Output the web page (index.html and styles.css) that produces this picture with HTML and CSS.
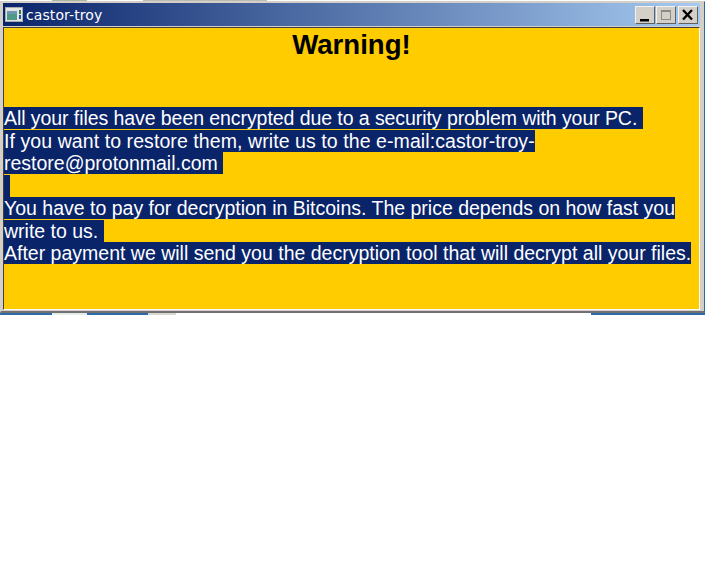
FILE: index.html
```html
<!DOCTYPE html>
<html lang="en">
<head>
<meta charset="utf-8">
<title>castor-troy</title>
<link rel="stylesheet" href="styles.css">
</head>
<body>
<div class="strip strip-top">
  <i class="s s-a"></i><i class="s s-b"></i><i class="s s-c"></i><i class="s s-d"></i>
</div>
<div class="window">
  <div class="titlebar">
    <svg class="appicon" width="18" height="15" viewBox="0 0 18 15" aria-hidden="true">
      <rect x="0" y="0" width="18" height="15" fill="#e4e6e4"/>
      <rect x="0.5" y="0.5" width="17" height="14" fill="none" stroke="#a8acb0"/>
      <rect x="2" y="4" width="10" height="9" fill="#4f9a86"/>
      <rect x="2" y="4" width="10" height="3" fill="#6f97b0"/>
      <rect x="14" y="3" width="2" height="4" fill="#2a7a5a"/>
      <rect x="14" y="8" width="2" height="4" fill="#2050a0"/>
    </svg>
    <span class="title">castor-troy</span>
    <div class="controls">
      <button class="btn" aria-label="Minimize"><svg width="18" height="16" viewBox="0 0 18 16"><rect x="4" y="12" width="9" height="2.5" fill="#000"/></svg></button>
      <button class="btn" aria-label="Maximize"><svg width="18" height="16" viewBox="0 0 18 16"><rect x="4.5" y="3.5" width="9" height="9" fill="none" stroke="#8a8a86"/><rect x="5" y="4" width="8" height="1" fill="#8a8a86"/></svg></button>
      <button class="btn btn-close" aria-label="Close"><svg width="18" height="16" viewBox="0 0 18 16"><path d="M4 3 L13 12.5 M13 3 L4 12.5" stroke="#000" stroke-width="2.4" fill="none"/></svg></button>
    </div>
  </div>
  <div class="content">
    <h1 class="heading">Warning!</h1>
    <p class="message"><span class="sel"><span class="tight">All your files have been encrypted due to a security problem with your PC.&nbsp;</span><br><span class="loose">If you want to restore them, write us to the e-mail:castor-troy-</span><br>restore@protonmail.com&nbsp;<br><span class="blank">&nbsp;</span><br>You have to pay for decryption in Bitcoins. The price depends on how fast you write to us.&nbsp;<br>After payment we will send you the decryption tool that will decrypt all your files.</span></p>
  </div>
</div>
<div class="strip strip-bottom">
  <i class="s s-e"></i><i class="s s-f"></i><i class="s s-g"></i><i class="s s-h"></i><i class="s s-i"></i><i class="s s-j"></i>
</div>
</body>
</html>
```
FILE: styles.css
```css
* { box-sizing: border-box; }
html, body { margin: 0; padding: 0; background: #fff; }
body { width: 720px; height: 576px; overflow: hidden; font-family: "Liberation Sans", Arial, sans-serif; }

.strip { display: flex; width: 705px; }
.strip-top { height: 1px; }
.strip-bottom { height: 2px; }
.s { display: block; height: 100%; }
.s-a { width: 52px; background: #fff; }
.s-b { width: 35px; background: #a9b8a0; }
.s-c { width: 56px; background: #fff; }
.s-d { width: 124px; background: #bcbcb4; }
.s-e { width: 52px; background: #2e6aa8; }
.s-f { width: 35px; background: #e4ecec; }
.s-g { width: 61px; background: #2e6aa8; }
.s-h { width: 28px; background: #d8d8d0; }
.s-i { width: 415px; background: #fff; }
.s-j { width: 114px; background: #2e6aa8; }

.window {
  width: 705px;
  height: 312px;
  display: flex;
  flex-direction: column;
  background: #d4d0c8;
  border-style: solid;
  border-width: 1px 1px 2px 1px;
  border-color: #d4d0c8 #2e6aa8 #707070 #d4d0c8;
  padding: 1px 4px 1px 2px;
}

.titlebar {
  height: 23px;
  flex: none;
  display: flex;
  align-items: center;
  padding: 0 2px;
  background: linear-gradient(90deg, #0a246a 0%, #a6caf0 100%);
}
.appicon { flex: none; }
.title { margin-left: 3px; color: #fff; font: 14px "DejaVu Sans", sans-serif; letter-spacing: 0.1px; }
.controls { margin-left: auto; display: flex; gap: 1px; }
.btn {
  width: 20px;
  height: 18px;
  margin: 0;
  padding: 0;
  display: flex;
  align-items: center;
  justify-content: center;
  background: #d4d0c8;
  border: 1px solid;
  border-color: #f4f2ee #606060 #606060 #f4f2ee;
}
.btn-close { margin-left: 1px; }

.content {
  flex: 1;
  margin-top: 1px;
  background: #fc0;
  border: 1px solid;
  border-color: #404040 #fff #fff #404040;
  overflow: hidden;
}
.heading {
  margin: 0;
  padding-top: 1px;
  font-size: 27.6px;
  line-height: 31px;
  font-weight: bold;
  text-align: center;
  color: #000;
}
.message {
  margin: 47px 0 0;
  font-size: 19.5px;
  line-height: 22.5px;
  color: #fff;
}
.sel { background: #0a246a; }
.tight { letter-spacing: -0.07px; }
.loose { letter-spacing: 0.08px; }
.blank { letter-spacing: 1px; }
```
